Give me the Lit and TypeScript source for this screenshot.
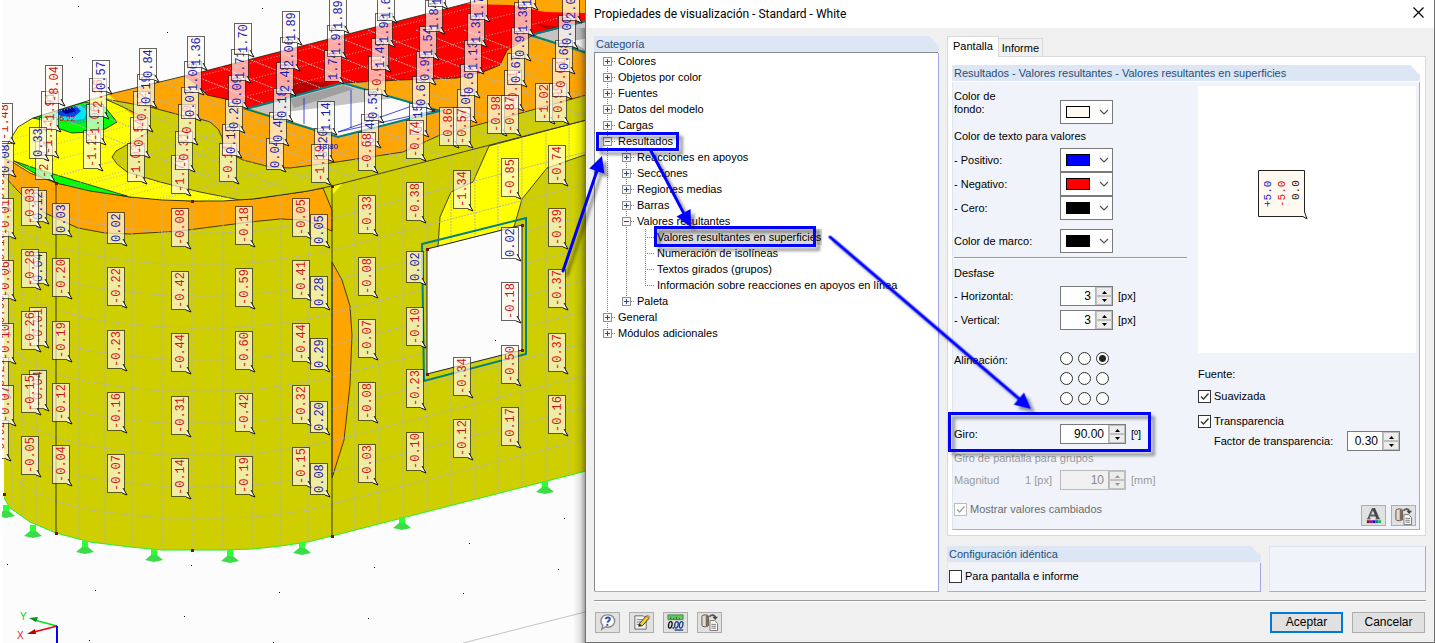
import { LitElement, html, svg, css } from "lit";
import { customElement, property } from "lit/decorators.js";
import { classMap } from "lit/directives/class-map.js";

type Point = [number, number];
type Flag = [number, number, string];

const poly = (points: Point[]) => points.map((p) => p.join(",")).join(" ");

/* Result flags: left edge, top edge, value. Later entries lie on top. */
const FLAGS: Flag[] = [
  [-9, 170, "-0.01"], [-9, 231, "-0.19"], [-9, 294, "-0.53"], [-9, 357, "-0.21"], [-9, 420, "-0.02"],
  [-5, 103, "-1.48"], [-4, 143, "0.08"], [-4, 198, "-0.01"], [-4, 260, "-0.06"], [-4, 323, "-0.10"], [-4, 385, "-0.07"],
  [35, 141, "-2.12"], [39, 117, "-1.11"], [41, 91, "-1.91"], [45, 65, "-8.04"], [29, 127, "0.33"],
  [83, 130, "-1.21"], [86, 104, "-1.06"], [89, 78, "-2.26"], [92, 60, "0.57"],
  [127, 143, "-1.03"], [130, 117, "-0.54"], [133, 91, "-0.12"], [137, 74, "0.19"], [139, 48, "0.84"],
  [171, 155, "-1.76"], [175, 131, "-0.31"], [178, 104, "-0.10"], [181, 87, "0.07"], [184, 61, "1.06"], [187, 36, "1.36"],
  [219, 143, "-0.11"], [222, 124, "0.13"], [225, 99, "0.29"], [228, 75, "0.09"], [231, 49, "1.71"], [234, 23, "1.70"],
  [266, 138, "0.04"], [269, 112, "0.49"], [273, 88, "0.18"], [276, 62, "2.48"], [280, 37, "2.06"], [282, 11, "1.89"],
  [314, 128, "0.20"], [317, 101, "1.14"], [311, 144, "-1.19"], [324, 50, "1.74"], [327, 25, "1.97"], [329, -1, "1.89"],
  [361, 114, "0.48"], [364, 89, "0.53"], [368, 56, "-0.01"], [371, 38, "1.49"], [375, 13, "1.90"], [377, -11, "1.69"],
  [358, 132, "-0.68"],
  [409, 103, "0.15"], [412, 76, "0.67"], [416, 51, "0.99"], [419, 26, "1.54"], [425, 0, "1.84"], [428, -25, "1.80"],
  [406, 120, "-0.74"],
  [457, 89, "0.05"], [460, 64, "0.67"], [464, 40, "1.13"], [467, 13, "1.38"], [470, -12, "1.74"],
  [439, 107, "-0.86"], [453, 107, "-0.57"],
  [504, 70, "-0.01"], [507, 53, "0.67"], [511, 27, "0.91"], [514, 2, "1.38"], [518, -24, "1.12"],
  [487, 95, "-0.98"], [501, 95, "-0.87"],
  [535, 83, "-1.02"], [549, 83, "-0.99"], [552, 58, "-0.01"], [555, 40, "0.68"], [558, 15, "0.00"], [562, -11, "2.00"],
  [29, 190, "0.12"], [29, 252, "0.04"], [29, 307, "-0.01"], [29, 370, "-0.04"],
  [21, 187, "-0.03"], [21, 249, "-0.28"], [21, 311, "-0.26"], [21, 374, "-0.15"], [21, 436, "-0.05"],
  [52, 203, "0.03"], [52, 258, "-0.20"], [52, 321, "-0.19"], [52, 383, "-0.12"], [52, 445, "-0.04"],
  [107, 212, "0.02"], [107, 267, "-0.22"], [107, 330, "-0.23"], [107, 392, "-0.16"], [107, 454, "-0.07"],
  [171, 208, "-0.08"], [171, 271, "-0.42"], [171, 333, "-0.44"], [171, 396, "-0.31"], [171, 458, "-0.14"],
  [235, 206, "-0.18"], [235, 268, "-0.59"], [235, 331, "-0.60"], [235, 393, "-0.42"], [235, 456, "-0.19"],
  [292, 198, "-0.05"], [292, 260, "-0.41"], [292, 323, "-0.44"], [292, 385, "-0.32"], [292, 447, "-0.15"],
  [310, 214, "0.05"], [310, 276, "0.28"], [310, 338, "0.29"], [310, 401, "0.20"], [310, 463, "0.08"],
  [358, 195, "-0.33"], [358, 257, "-0.08"], [358, 319, "-0.07"], [358, 382, "-0.08"], [358, 444, "-0.03"],
  [406, 182, "-0.38"], [406, 251, "0.02"], [406, 307, "-0.10"], [406, 369, "-0.23"], [406, 432, "-0.10"],
  [453, 170, "-1.34"], [453, 357, "-0.34"], [453, 419, "-0.12"],
  [501, 158, "-0.85"], [501, 227, "0.02"], [501, 282, "-0.18"], [501, 345, "-0.50"], [501, 407, "-0.17"],
  [548, 145, "-0.74"], [548, 208, "-0.39"], [548, 269, "-0.37"], [548, 333, "-0.37"], [548, 395, "-0.16"],
];

const RIM: Point[] = [[4, 158], [14, 163], [30, 173], [56, 183], [90, 191], [130, 197], [162, 200], [192, 201], [223, 201], [253, 199], [281, 195], [308, 191], [332, 186], [590, 119]];
const BASE: Point[] = [[4, 498], [10, 508], [30, 522], [56, 533], [90, 542], [130, 547], [162, 550], [192, 550], [223, 550], [253, 549], [281, 546], [308, 542], [332, 536], [590, 470]];
const ROOF: Point[] = [[4, 158], [8, 143], [18, 127], [33, 118], [68, 107], [110, 94], [205, 71], [480, 0], [590, 0], [590, 119]];
const VERTICALS = [12, 22, 37, 79, 105, 132, 162, 192, 223, 253, 281, 308, 355, 379, 403, 427, 451, 475, 498, 522, 546, 569];
const SUPPORTS: Point[] = [[6, 505], [33, 525], [85, 541], [154, 549], [230, 550], [302, 542], [402, 517], [545, 481]];
const DOTS: Point[] = [[78, 6], [262, 8], [167, 32], [72, 57], [7, 564], [95, 590], [191, 565], [279, 592], [184, 616], [89, 640], [273, 642], [374, 567], [463, 593], [368, 618], [469, 543], [564, 518], [558, 569], [551, 620], [495, 340]];
const NODES: Point[] = [[56, 183], [192, 201], [332, 186], [56, 533], [192, 550], [332, 536], [427, 249], [522, 225], [522, 350], [427, 374], [4, 494], [433, 110]];

const yAt = (line: Point[], x: number) => {
  for (let i = 1; i < line.length; i++) {
    const [x0, y0] = line[i - 1];
    const [x1, y1] = line[i];
    if (x <= x1) return y0 + ((y1 - y0) * (x - x0)) / (x1 - x0);
  }
  return line[line.length - 1][1];
};

@customElement("model-view")
class ModelView extends LitElement {
  static styles = css`
    :host { display: block; min-width: 0; position: relative; background: #fcfcfc; overflow: hidden; }
    .scene { position: absolute; inset: 0; width: 100%; height: 100%; }
    .mesh { fill: none; stroke: #b3b3b3; stroke-dasharray: 2 1; }
    .fine { stroke-dasharray: 1 2; }
    .edge { stroke: #1a1a1a; stroke-width: 0.8; }
    .teal { fill: none; stroke: #008080; stroke-width: 2; }
    .value { font: 12px "Liberation Mono", monospace; }
    .mark { font: 8px "Liberation Sans", sans-serif; }
    .axis { font: 10px "Liberation Sans", sans-serif; }
  `;

  private flag([x, y, text]: Flag) {
    const h = text.length > 4 ? 39 : 32;
    const b = y + h;
    return svg`<g>
      <rect x=${x + 0.5} y=${y + 0.5} width="17" height=${h - 1} fill="#fffaf0" fill-opacity=".68" stroke="#000" stroke-opacity=".6"/>
      <path d="M${x + 16} ${b - 5}L${x + 20} ${b + 2}L${x + 15} ${b}" fill="#fffaf0" stroke="#111"/>
      <text class="value" transform="translate(${x + 13} ${b - 2}) rotate(-90)" fill=${text[0] === "-" ? "#d01414" : "#1a1ab4"}>${text}</text>
    </g>`;
  }

  render() {
    const wall = poly([...RIM, ...[...BASE].reverse()]);
    const roof = poly([...ROOF, ...[...RIM].reverse()]);
    const rings = Array.from({ length: 10 }, (_, i) => {
      const t = (i + 1) / 11;
      return poly(RIM.map(([x, y], k) => [x, Math.round(y + (BASE[k][1] - y) * t)] as Point));
    });
    const roofLines = Array.from({ length: 18 }, (_, i) => i);
    return html`<svg class="scene" viewBox="0 0 585 643" preserveAspectRatio="xMinYMin slice" role="img" aria-label="Modelo">
      <defs>
        <clipPath id="roof"><polygon points=${roof}/></clipPath>
        <clipPath id="wall"><polygon points=${wall}/></clipPath>
        <linearGradient id="shade"><stop offset="0" stop-color="#000" stop-opacity="0"/><stop offset=".6" stop-color="#000" stop-opacity=".1"/><stop offset="1" stop-color="#000" stop-opacity=".35"/></linearGradient>
      </defs>
      <g clip-path="url(#roof)">
        <rect width="590" height="210" fill="#ffa500"/>
        <polygon points="0,160 0,100 107,93 123,107 147,127 147,133 112,157 127,172 160,182 200,192 247,200 130,205 0,180" fill="#ffff00"/>
        <polygon class="edge" points="105,99 150,107 180,115 200,119 210,122 218,129 222,137 224,150 243,160 270,167 290,168 330,163 403,152 440,135 503,118 590,94 590,125 332,190 250,202 200,192 160,182 127,172 117,164 112,157 116,151 130,143 147,133 146,127 139,115 123,107" fill="#cfcf00"/>
        <polygon class="edge" points="14,161 40,170 80,182 127,196 90,194 56,186" fill="#00ff00"/>
        <polygon class="edge" points="33,118 85,102 105,107 117,122 105,129 90,132 72,133 60,129 52,122" fill="#00ff00"/>
        <polygon points="48,116 84,104 96,110 97,119 78,124 60,121" fill="#00c878"/>
        <polygon points="52,114 80,105 87,111 84,119 66,121" fill="#00e6ff"/>
        <polygon points="55,112 76,106 81,111 74,117 61,116" fill="#0046e6"/>
        <polygon points="60,110 73,107 76,111 66,114" fill="#0000a0"/>
        <polygon points="185,76 465,4 512,5 545,12 590,13 590,22 530,37 507,50 500,65 483,72 457,78 400,80 343,83 248,108 230,100 207,95 198,86" fill="#ff0000"/>
        <polyline class="edge" fill="none" points="185,76 198,86 207,95 230,100 248,108"/>
        <polyline class="edge" fill="none" points="343,83 400,80 457,78 483,72 500,65 507,50 530,37 590,22"/>
        <polygon points="290,80 335,83 290,97" fill="#b80000"/>
        <polygon points="537,24 562,27 550,31" fill="#b80000"/>
        ${roofLines.map((i) => svg`
          <path class="mesh fine" d="M${i * 48 - 220} 250L${i * 48 + 380} 90"/>
          <path class="mesh" d="M${i * 48 - 160} 30L${i * 48 + 240} 190"/>
          <path class="mesh fine" d="M0 ${i * 16 + 30}L590 ${i * 16 - 118}"/>`)}
        <polygon points="250,108 343,84 438,111 338,136" fill="#fcfcfc"/>
        <polygon points="250,108 343,84 395,98 310,109 268,114" fill="#c4c4c4"/>
        <polygon points="290,99 343,85 354,89 294,108" fill="#a0a0a0"/>
        <path d="M304 98V124M351 90V128M338 132L412 106M338 132L438 110" stroke="#2020d0" fill="none" stroke-width=".8"/>
        <polygon class="teal" points="246,109 343,83 440,111 338,137"/>
        <polygon points="534,35 590,21 590,53" fill="#c4c4c4"/>
        <polygon points="572,41 590,38 590,53" fill="#fff"/>
        <polyline class="teal" points="590,20 530,35 590,54"/>
      </g>
      <g clip-path="url(#wall)">
        <polygon points=${wall} fill="#cfcf00"/>
        <polygon class="edge" points="0,150 56,183 130,197 192,201 253,199 308,191 323,188 332,210 332,231 305,220 280,219 250,222 180,231 130,234 105,233 78,228 45,213 20,193 4,176" fill="#ffa500"/>
        <polygon class="edge" points="332,262 342,280 350,306 352,335 350,385 344,440 332,478" fill="#ffa500"/>
        <polygon class="edge" points="489,146 590,119 590,153 547,168 522,199 514,227 438,247 440,217 451,192 473,182" fill="#ffff00"/>
        <polygon points="332,186 343,183 332,195" fill="#ffff00"/>
        ${rings.map((r) => svg`<polyline class="mesh" points=${r}/>`)}
        ${VERTICALS.map((x) => svg`<path class="mesh" d="M${x} ${yAt(RIM, x)}V${yAt(BASE, x)}"/>`)}
        <path d="M56 183V533M332 186V536" stroke="#3a3a00" fill="none"/>
      </g>
      <polyline class="edge" points=${poly(RIM)} fill="none"/>
      <polyline class="edge" points=${poly(ROOF.slice(0, 8))} fill="none"/>
      <polyline points=${poly(BASE)} fill="none" stroke="#20f020"/>
      <polygon points="427,249 522,225 522,350 427,374" fill="#fcfcfc" stroke="#222"/>
      <polygon class="teal" points="422,244 526,218 526,354 424,381"/>
      ${SUPPORTS.map(([x, y]) => svg`<path d="M${x - 3} ${y}h6v7h-6z" fill="#2eff3a"/><path d="M${x - 3} ${y + 6}h6l6 5l-9 2l-9-2z" fill="#3cdc48"/>`)}
      ${NODES.map(([x, y]) => svg`<rect x=${x - 1} y=${y - 1} width="3" height="3" fill="#7a1010"/>`)}
      ${FLAGS.map((f) => this.flag(f))}
      <text class="mark" x="57" y="121" fill="#e00000">-5.22</text>
      <text class="mark" x="318" y="149" fill="#0000e0">18.80</text>
      ${DOTS.map(([x, y]) => svg`<rect x=${x} y=${y} width="1" height="1" fill="#000"/>`)}
      <path d="M463 643L585 612" stroke="#c4c4c4"/>
      <path d="M57 626L34 620" stroke="#00e020" stroke-width="1.5"/><path d="M29 618l9-1l-2 5z" fill="#0a8c1e"/>
      <path d="M57 626L34 632" stroke="#f00000" stroke-width="1.5"/><path d="M27 634l8-5l1 5z" fill="#c00000"/>
      <path d="M57 626V643" stroke="#0000ff" stroke-width="2"/>
      <text class="axis" x="20" y="620" fill="#00d020">Y</text>
      <text class="axis" x="17" y="639" fill="#f02020">X</text>
      <rect width="2" height="643" fill="#fff"/>
      <rect x="573" y="28" width="12" height="615" fill="url(#shade)"/>
    </svg>`;
  }
}

@customElement("group-panel")
class GroupPanel extends LitElement {
  @property() heading = "";
  static styles = css`
    :host { display: flex; flex-direction: column; min-width: 0; }
    .head { flex: none; height: 16px; line-height: 17px; padding-left: 2px; background: #dce6f4; color: #1f4e79; white-space: nowrap; overflow: hidden;
      clip-path: polygon(0 0, calc(100% - 10px) 0, 100% 10px, 100% 100%, 0 100%); }
    .body { flex: 1; display: flex; flex-direction: column; margin-top: 1px; background: #f0f4fa; box-sizing: border-box; border: 1px solid #a6a6e8; border-top: 0; border-left-color: #dce6f4; }
  `;
  render() {
    return html`<div class="head">${this.heading}</div><div class="body"><slot></slot></div>`;
  }
}

@customElement("spin-box")
class SpinBox extends LitElement {
  @property() value = "";
  @property() label = "";
  @property({ type: Boolean }) wide = false;
  @property({ type: Boolean }) disabled = false;
  static styles = css`
    :host { display: block; }
    .box { display: flex; box-sizing: border-box; width: 53px; height: 20px; background: #fff; border: 1px solid #7a7a7a; }
    .wide { width: 66px; }
    .off { background: #f0f0f0; border-color: #bcbcbc; }
    input { flex: 1; min-width: 0; width: 0; border: 0; padding: 0 4px 0 0; background: none; text-align: right; font: inherit; font-size: 12px; color: #000; outline: 0; }
    input:disabled { color: #888; }
    .arrows { display: flex; flex-direction: column; width: 16px; border-left: 1px solid #b4b4b4; }
    button { flex: 1; min-height: 0; padding: 0; border: 1px solid #c0c0c0; background: #ececec; display: flex; align-items: center; justify-content: center; color: #000; }
    button:disabled { color: #999; }
    svg { display: block; }
  `;
  render() {
    return html`<div class=${classMap({ box: true, wide: this.wide, off: this.disabled })}>
      <input type="text" .value=${this.value} aria-label=${this.label} ?disabled=${this.disabled} />
      <div class="arrows">
        <button aria-label="Aumentar" ?disabled=${this.disabled}><svg width="7" height="4"><path d="M1 4L3.500 1L6 4z" fill="currentColor"/></svg></button>
        <button aria-label="Disminuir" ?disabled=${this.disabled}><svg width="7" height="4"><path d="M1 0L3.500 3L6 0z" fill="currentColor"/></svg></button>
      </div>
    </div>`;
  }
}

@customElement("color-select")
class ColorSelect extends LitElement {
  @property() color = "#000";
  @property() label = "";
  static styles = css`
    :host { display: block; }
    .combo { display: grid; grid-template-columns: 53px; height: 24px; align-items: center; }
    .combo > * { grid-area: 1 / 1; }
    select { appearance: none; width: 53px; height: 24px; border: 1px solid #7a7a7a; border-radius: 0; background: #fff; padding: 0; }
    .swatch { width: 22px; height: 10px; margin-left: 6px; border: 1px solid #000; pointer-events: none; }
    .chevron { justify-self: end; margin-right: 4px; pointer-events: none; }
  `;
  render() {
    return html`<div class="combo">
      <select aria-label=${this.label}><option value=${this.color} aria-label=${this.color}></option></select>
      <span class="swatch" style="background:${this.color}"></span>
      <svg class="chevron" width="10" height="6"><path d="M1 1L5 5L9 1" fill="none" stroke="#555" stroke-width="1.200"/></svg>
    </div>`;
  }
}

interface Item { text: string; open?: boolean; leaf?: boolean; selected?: boolean; children?: Item[]; }
const leaf = (text: string, selected = false): Item => ({ text, leaf: true, selected });
const TREE: Item[] = [
  { text: "Colores" }, { text: "Objetos por color" }, { text: "Fuentes" }, { text: "Datos del modelo" }, { text: "Cargas" },
  { text: "Resultados", open: true, children: [
    { text: "Reacciones en apoyos" }, { text: "Secciones" }, { text: "Regiones medias" }, { text: "Barras" },
    { text: "Valores resultantes", open: true, children: [
      leaf("Valores resultantes en superficies", true), leaf("Numeración de isolíneas"), leaf("Textos girados (grupos)"), leaf("Información sobre reacciones en apoyos en línea"),
    ] },
    { text: "Paleta" },
  ] },
  { text: "General" }, { text: "Módulos adicionales" },
];

@customElement("category-tree")
class CategoryTree extends LitElement {
  static styles = css`
    :host { display: block; }
    ul { list-style: none; margin: 0; padding: 0; }
    ul ul { padding-left: 19px; }
    li { background: repeating-linear-gradient(#808080 0 1px, transparent 1px 2px) 4px 0 / 1px 100% no-repeat; }
    ul[role="tree"] > li:first-child { background-position: 4px 8px; }
    li:last-child { background-size: 1px 8px; }
    .row { display: flex; align-items: center; height: 16px; }
    .toggle { flex: none; width: 9px; height: 9px; padding: 0; border: 1px solid #919191; background: #f6f6f6; display: flex; }
    .stub { flex: none; width: 4px; height: 1px; background: repeating-linear-gradient(90deg, #808080 0 1px, transparent 1px 2px); }
    .long { width: 10px; margin-left: 4px; }
    .label { line-height: 16px; padding: 0 1px; margin-left: 1px; white-space: nowrap; color: #000; }
    .selected { background: #d9d9d9; }
  `;
  private item(i: Item): unknown {
    return html`<li role="treeitem">
      <div class="row">
        ${i.leaf ? "" : html`<button class="toggle" aria-label=${i.open ? "Contraer" : "Expandir"}><svg width="7" height="7"><path d=${i.open ? "M1 3.500H6" : "M1 3.500H6M3.500 1V6"} stroke="#2b4a8c"/></svg></button>`}
        <span class=${classMap({ stub: true, long: !!i.leaf })}></span>
        <span class=${classMap({ label: true, selected: !!i.selected })}>${i.text}</span>
      </div>
      ${i.children ? html`<ul role="group">${i.children.map((c) => this.item(c))}</ul>` : ""}
    </li>`;
  }
  render() {
    return html`<ul role="tree">${TREE.map((i) => this.item(i))}</ul>`;
  }
}

const iconHelp = svg`<path d="M10 2a7 6.500 0 1 1-2 12.500L4 17l1-4A7 6.500 0 0 1 10 2z" fill="#fafafa" stroke="#8a8a8a" stroke-width="1.500"/><path d="M8 6.500c.5-2.500 5-2.300 4.500.2c-.3 1.400-2.200 1.500-2.500 3.500" fill="none" stroke="#2a50a8" stroke-width="2"/><path d="M8.800 11.500h2v2h-2z" fill="#2a50a8"/>`;
const iconEdit = svg`<path d="M3 3h9l3 3v11H3z" fill="#f4f4f4" stroke="#666"/><path d="M5 7h6M5 9.500h5M5 12h3" stroke="#777"/><path d="M7 14l1-3l7-8l3 2.500l-7 8z" fill="#f2d21e" stroke="#333"/><path d="M15 3l1.500-1.500l3 2.500L18 5.500z" fill="#d88"/><path d="M7 14l1-3l2 2z" fill="#222"/>`;
const iconUnits = svg`<path d="M2 2h16v5H2z" fill="#6cc46c" stroke="#3d8f3d"/><path d="M5 4v3M8 5v2M11 4v3M14 5v2" stroke="#256e25"/><g fill="none" stroke="#111" stroke-width="1.400"><ellipse cx="4.500" cy="12.500" rx="1.800" ry="3.500" transform="rotate(12 4.500 12.500)"/><path d="M7.500 15v1.500"/></g><g fill="none" stroke="#1d3f86" stroke-width="1.400"><ellipse cx="11" cy="12.500" rx="1.800" ry="3.500" transform="rotate(12 11 12.500)"/><ellipse cx="16" cy="12.500" rx="1.800" ry="3.500" transform="rotate(12 16 12.500)"/><path d="M9 18h9"/></g>`;
const iconCopy = svg`<path d="M2 3.500c0-2 7-2 7 0v9.500c0 2-7 2-7 0z" fill="#e4dbd0" stroke="#5e5248"/><path d="M6 2.500c3 0 3 1 3 1v9.500c0 1-3 1.500-3 1.500z" fill="#7d6b5c"/><path d="M10 4c2-3 6-2 6 1" fill="none" stroke="#555" stroke-width="1.800"/><path d="M13 4h6l-3 3.500z" fill="#444"/><path d="M10.500 8h5l3 3v7.500h-8z" fill="#fafafa" stroke="#777"/><path d="M12 12h5M12 14h5M12 16h5" stroke="#777"/>`;
const iconFont = svg`<path d="M4.500 12.500L9 2h2L15.500 12.500M6.500 9h7" fill="none" stroke="#606060" stroke-width="2"/><path d="M10 2L14.500 12.500" stroke="#444" stroke-width="2.500"/><path d="M3 12.500h4M12 12.500h5" stroke="#555"/><path d="M3 14h3v3H3z" fill="#8c1010"/><path d="M6 14h3v3H6z" fill="#901090"/><path d="M9 14h3v3H9z" fill="#3000d0"/><path d="M12 14h3v3h-3z" fill="#1070a0"/><path d="M15 14h3v3h-3z" fill="#10c040"/>`;

@customElement("icon-button")
class IconButton extends LitElement {
  @property() label = "";
  @property({ attribute: false }) icon: unknown = "";
  static styles = css`
    :host { display: block; }
    button { box-sizing: border-box; width: 25px; height: 21px; padding: 0; border: 1px solid #adadad; background: #e1e1e1; display: flex; align-items: center; justify-content: center; }
  `;
  render() {
    return html`<button aria-label=${this.label}><svg width="19" height="18" viewBox="0 0 20 19">${this.icon}</svg></button>`;
  }
}

@customElement("properties-dialog")
class PropertiesDialog extends LitElement {
  static styles = css`
    :host { display: flex; flex-direction: column; box-sizing: border-box; min-width: 0; background: #f0f0f0; border: 1px solid #707070; border-top: 0; font: 11px "Liberation Sans", Arial, sans-serif; color: #000; }
    .title { display: flex; justify-content: space-between; align-items: center; height: 28px; padding: 0 10px 0 8px; background: #fff; font: 12px Roboto, sans-serif; }
    .title h1 { font: inherit; margin: 0; line-height: 26px; padding-bottom: 1px; }
    .close { border: 0; background: none; padding: 0; display: flex; margin-bottom: 4px; }
    .main { flex: 1; display: grid; grid-template-columns: 345fr 479fr; gap: 8px; padding: 8px; }
    .treebox { flex: 1; background: #fff; border-top: 1px solid #8c8c8c; border-left: 1px solid #8c8c8c; margin: -1px 0 0 -1px; padding-left: 8px; }
    .side { display: flex; flex-direction: column; min-width: 0; }
    .tabs { display: flex; align-items: flex-end; height: 20px; }
    .tab { box-sizing: border-box; height: 18px; border: 1px solid #d9d9d9; border-bottom: 0; border-left: 0; background: #f0f0f0; font: inherit; color: #000; padding: 0 3px; }
    .active { height: 21px; margin-bottom: -1px; background: #fff; border-left: 1px solid #d9d9d9; padding: 0 5px 2px; z-index: 1; }
    .page { flex: 1; display: flex; background: #fff; border: 1px solid #d9d9d9; padding: 8px 5px 5px 4px; }
    .page group-panel { flex: 1; }
    .cols { flex: 1; display: grid; grid-template-columns: minmax(233px, 1fr) 218px; gap: 11px; padding: 4px 3px 3px 1px; }
    .form, .right { display: flex; flex-direction: column; min-width: 0; }
    .row { display: grid; grid-template-columns: 106px auto 1fr; align-items: center; min-height: 24px; white-space: nowrap; }
    .unit { padding-left: 5px; }
    .background { align-items: end; min-height: 38px; }
    .background .two { align-self: start; line-height: 13px; padding-top: 4px; width: 50px; white-space: normal; }
    .section { line-height: 24px; }
    .frame { margin-top: 9px; }
    .rule { border: 0; border-top: 1px solid #999; border-bottom: 1px solid #fff; margin: 4px 0 3px; }
    .offset { line-height: 22px; }
    .align { margin-top: 16px; align-items: start; line-height: 24px; }
    .radios { display: grid; grid-template-columns: repeat(3, 18px); grid-auto-rows: 20px; align-items: center; }
    input[type="radio"] { appearance: none; width: 13px; height: 13px; margin: 0; border: 1px solid #333; border-radius: 50%; background: #fff; }
    input[type="radio"]:checked { background: radial-gradient(circle, #222 0 3px, #fff 4px); }
    .turn { margin-top: 14px; }
    .off { color: #9a9a9a; }
    .magnitude { display: flex; justify-content: space-between; padding-right: 8px; }
    .check { display: flex; align-items: center; gap: 3px; line-height: 16px; white-space: nowrap; }
    input[type="checkbox"] { appearance: none; flex: none; width: 13px; height: 13px; margin: 0; border: 1px solid #333; background: #fff; }
    input[type="checkbox"]:disabled { border-color: #bcbcbc; }
    .tick { display: grid; }
    .tick > * { grid-area: 1 / 1; }
    .tick svg { pointer-events: none; color: #333; }
    .off .tick svg { color: #a0a0a0; }
    .changed { margin-top: 9px; color: #6d6d6d; }
    .groups { line-height: 19px; padding-top: 3px; }
    .preview { height: 267px; background: #fff; }
    .preview svg { display: block; }
    .sample { font: 11px "Liberation Mono", monospace; }
    .font-label { line-height: 16px; margin-top: 13px; }
    .smooth { margin-top: 6px; }
    .transparent { margin-top: 9px; }
    .factor { display: flex; align-items: center; justify-content: space-between; padding: 2px 16px 0 16px; }
    .tools { margin-top: auto; display: flex; gap: 5px; justify-content: flex-end; }
    .bottom { display: grid; grid-template-columns: 314fr 157fr; gap: 8px; height: 46px; margin-top: 10px; }
    .same { padding: 5px 0 0 1px; }
    .empty { background: #f0f4fa; border: 1px solid #a6a6e8; border-top-color: #dce6f4; border-left-color: #dce6f4; }
    .footer { display: flex; align-items: center; margin: 0 8px; border-top: 1px solid #999; height: 42px; box-sizing: border-box; box-shadow: inset 0 1px #fff; gap: 9px; padding: 1px 1px 0; }
    .footer .push { flex: 1; }
    .command { width: 73px; height: 21px; box-sizing: border-box; border: 1px solid #adadad; background: #e1e1e1; font: 12px "Liberation Sans", Arial, sans-serif; color: #000; padding: 0; }
    .default { border: 2px solid #0078d7; }
  `;

  private tick(id: string, disabled = false, checked = true) {
    return html`<span class="tick"><input id=${id} type="checkbox" ?checked=${checked} ?disabled=${disabled} />${checked ? html`<svg width="13" height="13"><path d="M3 6.500L5.500 9L10.500 3.500" fill="none" stroke="currentColor" stroke-width="1.300"/></svg>` : ""}</span>`;
  }
  private colorRow(label: string, color: string, cls = "") {
    return html`<div class="row ${cls}"><span>${label}</span><color-select label=${label} color=${color}></color-select></div>`;
  }
  render() {
    return html`
      <div class="title"><h1>Propiedades de visualización - Standard - White</h1>
        <button class="close" aria-label="Cerrar"><svg width="11" height="11"><path d="M.5.500L10.500 10.500M10.500.500L.5 10.500" stroke="#000" stroke-width="1.200"/></svg></button></div>
      <div class="main">
        <group-panel heading="Categoría"><div class="treebox"><category-tree></category-tree></div></group-panel>
        <div class="side">
          <div class="tabs" role="tablist"><button class="tab active" role="tab">Pantalla</button><button class="tab" role="tab">Informe</button></div>
          <div class="page">
            <group-panel heading="Resultados - Valores resultantes - Valores resultantes en superficies">
              <div class="cols">
                <div class="form">
                  <div class="row background"><span class="two">Color de fondo:</span><color-select label="Color de fondo" color="#fffaf0"></color-select></div>
                  <div class="section">Color de texto para valores</div>
                  ${this.colorRow("- Positivo:", "#0000ff")}
                  ${this.colorRow("- Negativo:", "#ff0000")}
                  ${this.colorRow("- Cero:", "#000000")}
                  ${this.colorRow("Color de marco:", "#000000", "frame")}
                  <hr class="rule" />
                  <div class="offset">Desfase</div>
                  <div class="row"><span>- Horizontal:</span><spin-box label="Horizontal" value="3"></spin-box><span class="unit">[px]</span></div>
                  <div class="row"><span>- Vertical:</span><spin-box label="Vertical" value="3"></spin-box><span class="unit">[px]</span></div>
                  <div class="row align"><span>Alineación:</span><div class="radios" role="radiogroup" aria-label="Alineación">
                    ${[0, 1, 2, 3, 4, 5, 6, 7, 8].map((n) => html`<input type="radio" name="align" aria-label="Alineación ${n + 1}" ?checked=${n === 2} />`)}
                  </div></div>
                  <div class="row turn"><span>Giro:</span><spin-box wide label="Giro" value="90.00"></spin-box><span class="unit">[º]</span></div>
                  <div class="groups off">Giro de pantalla para grupos</div>
                  <div class="row off"><span class="magnitude"><span>Magnitud</span><span>1 [px]</span></span><spin-box wide disabled label="Magnitud" value="10"></spin-box><span class="unit">[mm]</span></div>
                  <div class="check changed off">${this.tick("changed", true)}<label for="changed">Mostrar valores cambiados</label></div>
                </div>
                <div class="right">
                  <div class="preview"><svg width="218" height="267" role="img" aria-label="Vista previa">
                    <path d="M60.500 84.500H106.500V126L109 133L105 130.500H60.500z" fill="#fffaf0" stroke="#222"/>
                    <g class="sample"><text transform="translate(73 121) rotate(-90)" fill="#1a1ad0">+5.0</text><text transform="translate(87 121) rotate(-90)" fill="#e01414">-5.0</text><text transform="translate(101 114) rotate(-90)" fill="#222">0.0</text></g>
                  </svg></div>
                  <div class="font-label">Fuente:</div>
                  <div class="check smooth">${this.tick("smooth")}<label for="smooth">Suavizada</label></div>
                  <div class="check transparent">${this.tick("transparent")}<label for="transparent">Transparencia</label></div>
                  <div class="factor"><span>Factor de transparencia:</span><spin-box label="Factor de transparencia" value="0.30"></spin-box></div>
                  <div class="tools"><icon-button label="Fuente" .icon=${iconFont}></icon-button><icon-button label="Copiar" .icon=${iconCopy}></icon-button></div>
                </div>
              </div>
            </group-panel>
          </div>
          <div class="bottom">
            <group-panel heading="Configuración idéntica"><div class="check same">${this.tick("same", false, false)}<label for="same">Para pantalla e informe</label></div></group-panel>
            <div class="empty"></div>
          </div>
        </div>
      </div>
      <div class="footer">
        <icon-button label="Ayuda" .icon=${iconHelp}></icon-button>
        <icon-button label="Comentario" .icon=${iconEdit}></icon-button>
        <icon-button label="Unidades" .icon=${iconUnits}></icon-button>
        <icon-button label="Copiar" .icon=${iconCopy}></icon-button>
        <span class="push"></span>
        <button class="command default">Aceptar</button>
        <button class="command">Cancelar</button>
      </div>`;
  }
}

@customElement("app-root")
class AppRoot extends LitElement {
  static styles = css`
    :host { display: grid; grid-template-columns: 585fr 850fr; min-height: 100vh; position: relative; background: #fcfcfc; }
    .notes { position: absolute; inset: 0; width: 100%; height: 100%; pointer-events: none; }
  `;
  private arrow(x0: number, y0: number, x1: number, y1: number) {
    const a = Math.atan2(y1 - y0, x1 - x0);
    const len = Math.hypot(x1 - x0, y1 - y0);
    return svg`<g transform="translate(${x0} ${y0}) rotate(${(a * 180) / Math.PI})"><path d="M0 0H${len - 8}" stroke="#0000ff" stroke-width="3" stroke-linecap="round"/><path d="M${len} 0l-16 -8v16z" fill="#0000ff"/></g>`;
  }
  render() {
    return html`<model-view></model-view><properties-dialog></properties-dialog>
      <svg class="notes" viewBox="0 0 1435 643" preserveAspectRatio="xMinYMin meet" aria-hidden="true">
        <defs><filter id="drop" filterUnits="userSpaceOnUse" x="0" y="0" width="1435" height="643"><feDropShadow dx="4" dy="4" stdDeviation="1.500" flood-color="#000" flood-opacity=".4"/></filter></defs>
        <g filter="url(#drop)" fill="none" stroke="#0000ff" stroke-width="3">
          <rect x="597.500" y="133.500" width="80" height="16"/><rect x="655.500" y="227.500" width="159" height="18"/><rect x="949.500" y="413.500" width="200" height="37"/>
        </g>
        <g filter="url(#drop)">${this.arrow(563, 271, 602, 156)}${this.arrow(651, 151, 691, 227)}${this.arrow(830, 237, 1031, 409)}</g>
      </svg>`;
  }
}
